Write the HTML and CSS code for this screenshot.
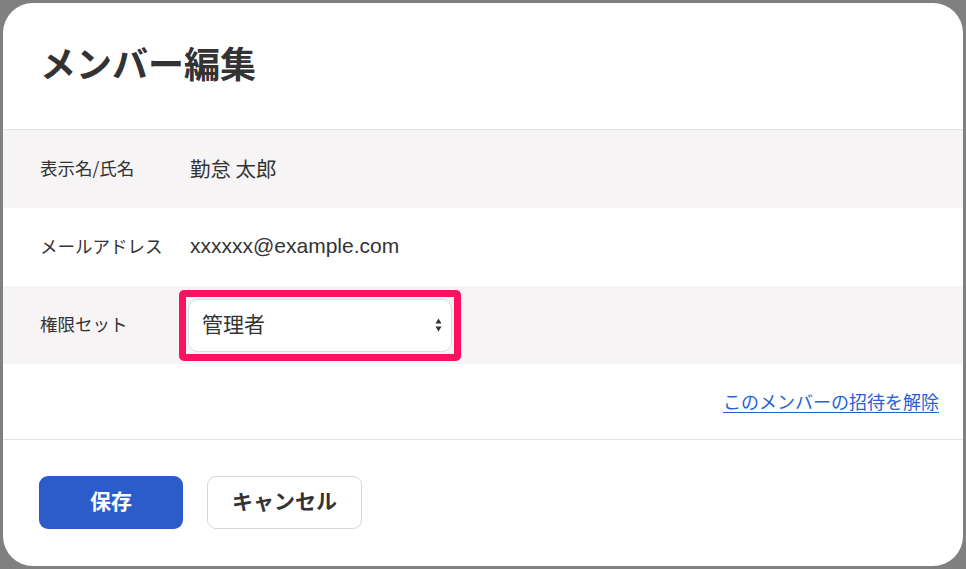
FILE: index.html
```html
<!DOCTYPE html>
<html lang="ja">
<head>
<meta charset="utf-8">
<title>メンバー編集</title>
<link rel="stylesheet" href="styles.css">
</head>
<body>
<div class="modal">
  <div class="modal-header">
    <h1 class="title">メンバー編集</h1>
  </div>
  <div class="row row-shade">
    <div class="label">表示名/氏名</div>
    <div class="value">勤怠 太郎</div>
  </div>
  <div class="row">
    <div class="label">メールアドレス</div>
    <div class="value value-latin">xxxxxx@example.com</div>
  </div>
  <div class="row row-shade">
    <div class="label">権限セット</div>
    <div class="highlight">
      <div class="select">
        <span class="select-text">管理者</span>
        <svg class="select-arrows" width="7" height="14" viewBox="0 0 7 14" aria-hidden="true">
          <path d="M3.5 0.5 L6.5 5.5 L0.5 5.5 Z" fill="#333"/>
          <path d="M3.5 13.5 L6.5 8.5 L0.5 8.5 Z" fill="#333"/>
        </svg>
      </div>
    </div>
  </div>
  <div class="link-area">
    <a class="revoke-link" href="#">このメンバーの招待を解除</a>
  </div>
  <div class="footer">
    <button class="btn btn-primary">保存</button>
    <button class="btn btn-secondary">キャンセル</button>
  </div>
</div>
</body>
</html>
```
FILE: styles.css
```css
* { box-sizing: border-box; }
html, body { margin: 0; padding: 0; }
body {
  background: #808080;
  padding: 3px;
  font-family: "Noto Sans CJK JP", "Noto Sans", sans-serif;
  color: #333;
}
.modal {
  width: 960px;
  height: 563px;
  background: #fff;
  border-radius: 30px;
  overflow: hidden;
  display: flex;
  flex-direction: column;
}
.modal-header {
  height: 127px;
  border-bottom: 1px solid #e3e3e3;
  display: flex;
  align-items: center;
  padding: 0 0 8px 37px;
}
.title {
  margin: 0;
  font-size: 36px;
  font-weight: 700;
  line-height: 1;
  color: #333;
}
.row {
  height: 78px;
  display: flex;
  align-items: center;
  padding-left: 37px;
  padding-bottom: 3px;
}
.row-shade { background: #f6f4f5; }
.label {
  width: 150px;
  font-size: 17.5px;
  color: #333;
}
.value {
  font-size: 20.5px;
  color: #333;
}
.value-latin {
  font-family: "Liberation Sans", "Noto Sans CJK JP", sans-serif;
  font-size: 21px;
}
.highlight {
  margin-left: -11px;
  margin-top: 3px;
  border: 7px solid #ff1060;
  border-radius: 5px;
  padding: 2px;
  width: 282px;
  height: 71px;
}
.select {
  height: 100%;
  background: #fff;
  border: 1px solid #dcdcdc;
  border-radius: 10px;
  display: flex;
  align-items: center;
  justify-content: space-between;
  padding: 0 9px 0 13px;
}
.select-text {
  font-size: 21px;
  color: #333;
  line-height: 1;
  padding-bottom: 4px;
}
.select-arrows { display: block; }
.link-area {
  height: 76px;
  border-bottom: 1px solid #e3e3e3;
  display: flex;
  align-items: center;
  justify-content: flex-end;
  padding-right: 24px;
  padding-bottom: 2px;
}
.revoke-link {
  font-size: 18px;
  color: #2a5fd2;
  text-decoration: underline;
  text-underline-offset: 3px;
}
.footer {
  display: flex;
  gap: 24px;
  padding: 36px 0 0 36px;
}
.btn {
  height: 53px;
  border-radius: 9px;
  font-family: "Noto Sans CJK JP", sans-serif;
  font-weight: 700;
  font-size: 21px;
  line-height: 1;
  padding: 0 0 4px 0;
  cursor: pointer;
}
.btn-primary {
  width: 144px;
  background: #2b5cc9;
  border: none;
  color: #fff;
}
.btn-secondary {
  width: 155px;
  background: #fff;
  border: 1px solid #d8d8d8;
  color: #333;
}
```
